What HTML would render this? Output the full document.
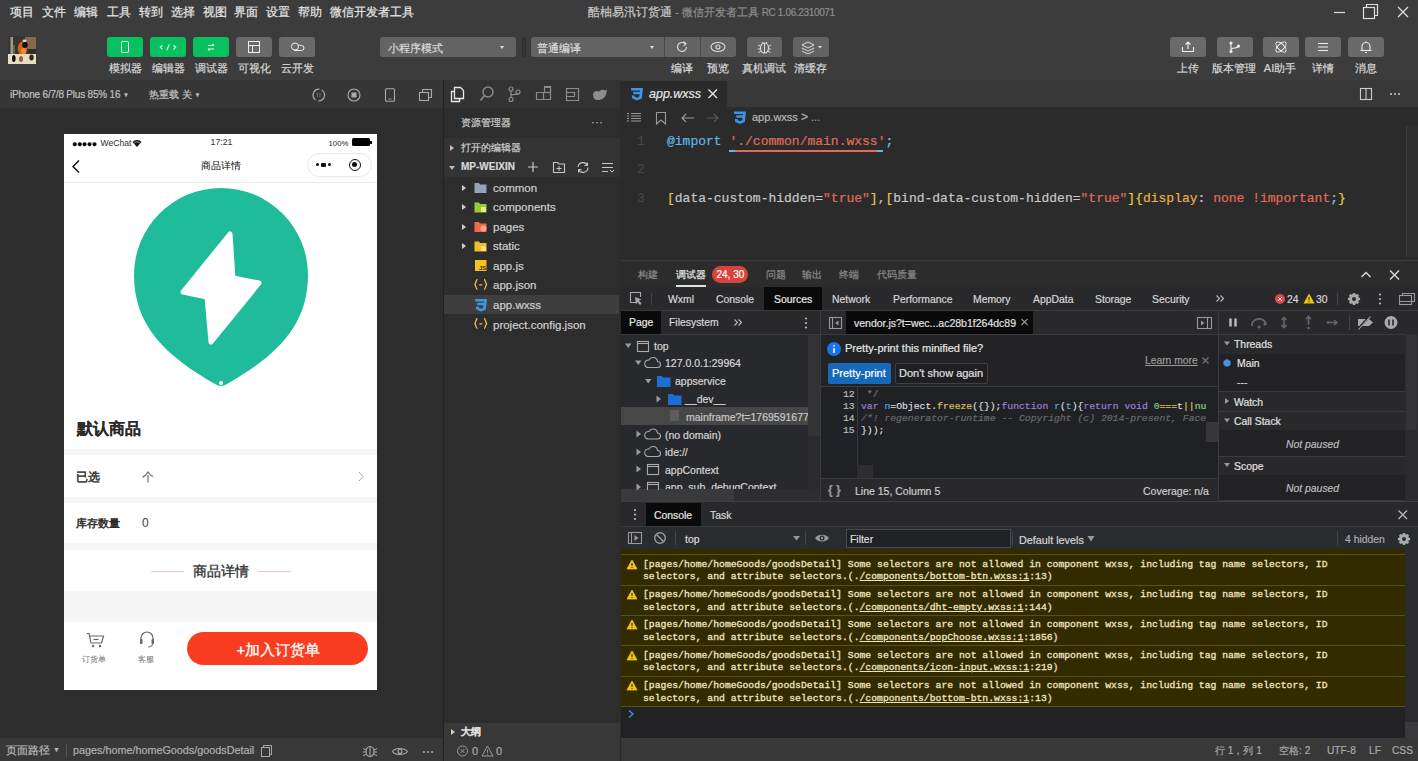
<!DOCTYPE html>
<html><head><meta charset="utf-8">
<style>
*{box-sizing:border-box;margin:0;padding:0}
html,body{width:1418px;height:761px;overflow:hidden;background:#2d2d2d;font-family:"Liberation Sans",sans-serif;color:#ccc}
body{-webkit-text-stroke-width:0.2px}
.a{position:absolute}
.nw{white-space:nowrap}
svg{display:block}
.mono{font-family:"Liberation Mono",monospace;font-size:9.76px;line-height:12.7px;-webkit-text-stroke:0.3px #eee3c2}
u{text-decoration:underline;text-underline-offset:1px}
/* menu */
#menu span{position:absolute;top:5px;font-size:11.7px;color:#e6e6e6;line-height:14px}
.tb{position:absolute;top:37px;width:36px;height:20px;border-radius:3px;background:#6a6a6a}
.tb.g{background:#07c160}
.tl{position:absolute;top:62px;font-size:11px;line-height:13px;color:#d8d8d8;text-align:center;white-space:nowrap}
</style></head><body>
<!-- top bar -->
<div class="a" style="left:0;top:0;width:1418px;height:80px;background:#3c3c3c"></div>
<div id="menu">
<span style="left:10px">项目</span><span style="left:42px">文件</span><span style="left:74px">编辑</span><span style="left:107px">工具</span><span style="left:139px">转到</span><span style="left:171px">选择</span><span style="left:203px">视图</span><span style="left:234px">界面</span><span style="left:266px">设置</span><span style="left:298px">帮助</span><span style="left:330px">微信开发者工具</span>
</div>
<div class="a nw" style="left:588px;top:5px;font-size:11.5px;line-height:14px;color:#c8c8c8">酷柚易汛订货通 <span style="color:#8e8e8e;font-size:10.6px">- 微信开发者工具 <span style="font-size:10px;letter-spacing:-0.35px">RC 1.06.2310071</span></span></div>
<!-- window controls -->
<svg class="a" style="left:1330px;top:4px" width="88" height="18">
<line x1="4" y1="8.5" x2="15" y2="8.5" stroke="#ddd" stroke-width="1.2"/>
<rect x="33.5" y="3.5" width="11" height="11" fill="none" stroke="#ddd" stroke-width="1.2"/>
<path d="M36.5 3.5V0.5H47.5V11.5H44.5" fill="none" stroke="#ddd" stroke-width="1.2"/>
<path d="M68 3L78 13M78 3L68 13" stroke="#ddd" stroke-width="1.3"/>
</svg>
<!-- avatar -->
<svg class="a" style="left:8px;top:36px" width="28" height="28" viewBox="0 0 28 28">
<defs><filter id="bl" x="-10%" y="-10%" width="120%" height="120%"><feGaussianBlur stdDeviation="0.7"/></filter></defs>
<g filter="url(#bl)">
<rect x="0" y="0" width="28" height="28" fill="#3a342e"/>
<rect x="17" y="1" width="11" height="12" fill="#86684e"/>
<rect x="2.5" y="1" width="2.5" height="19" fill="#9a9a96"/>
<rect x="5.5" y="9" width="1" height="12" fill="#7a9a50"/>
<ellipse cx="14.5" cy="12.5" rx="4.7" ry="7" fill="#d2601c"/>
<ellipse cx="15.5" cy="15" rx="2.5" ry="3" fill="#f09028"/>
<ellipse cx="17" cy="9" rx="2.8" ry="3" fill="#101018"/>
<ellipse cx="16.5" cy="4.8" rx="2" ry="1.3" fill="#e8dcc0"/>
<rect x="20" y="13" width="8" height="4.5" fill="#283028"/>
<rect x="0" y="18" width="28" height="10" fill="#e6dec2"/>
<ellipse cx="5.8" cy="22.5" rx="1.8" ry="3.5" fill="#111"/>
<ellipse cx="13" cy="23" rx="2" ry="3" fill="#a05a40"/>
<ellipse cx="23.5" cy="21.5" rx="2.2" ry="3" fill="#2a2a18"/>
</g></svg>
<!-- left tool buttons -->
<div class="tb g" style="left:107px"><svg width="36" height="20"><rect x="14.5" y="4.5" width="7" height="11" rx="1" fill="none" stroke="#fff" stroke-width="1"/></svg></div>
<div class="tb g" style="left:150px"><svg width="36" height="20"><path d="M12.5 8.3L10.3 10.3L12.5 12.3M23.5 8.3L25.7 10.3L23.5 12.3M19.3 7.5L16.7 13.2" fill="none" stroke="#eafff2" stroke-width="1.1"/></svg></div>
<div class="tb g" style="left:193px"><svg width="36" height="20"><path d="M15 8.5H21M19.5 7L21 8.5M21 12H15M16.5 13.5L15 12" fill="none" stroke="#eafff2" stroke-width="1.1"/></svg></div>
<div class="tb" style="left:236px"><svg width="36" height="20"><rect x="12.5" y="4.5" width="11" height="11" fill="none" stroke="#eee" stroke-width="1"/><path d="M12.5 8.5H23.5M16.5 8.5V15.5" stroke="#eee" stroke-width="1"/></svg></div>
<div class="tb" style="left:279px"><svg width="36" height="20"><circle cx="16" cy="9.5" r="3.5" fill="none" stroke="#eee" stroke-width="1"/><path d="M15 13.5H22.5A2.5 2.5 0 0 0 22.5 8.5A3 3 0 0 0 19 9" fill="none" stroke="#eee" stroke-width="1"/></svg></div>
<div class="tl" style="left:100px;width:50px">模拟器</div>
<div class="tl" style="left:143px;width:50px">编辑器</div>
<div class="tl" style="left:186px;width:50px">调试器</div>
<div class="tl" style="left:229px;width:50px">可视化</div>
<div class="tl" style="left:272px;width:50px">云开发</div>
<!-- mode dropdowns -->
<div class="a" style="left:380px;top:37px;width:136px;height:20px;border-radius:3px;background:#636363"></div>
<div class="a nw" style="left:387.5px;top:40.5px;font-size:10.7px;line-height:14px;color:#dedede">小程序模式</div>
<div class="a" style="left:500px;top:46px;width:0;height:0;border-left:2.5px solid transparent;border-right:2.5px solid transparent;border-top:3px solid #ddd"></div>
<div class="a" style="left:522px;top:37px;width:4px;height:20px;background:#353535;border-left:1px solid #2e2e2e;border-right:1px solid #2e2e2e"></div>
<div class="a" style="left:531px;top:37px;width:205px;height:20px;border-radius:3px;background:#636363"></div>
<div class="a" style="left:664px;top:37px;width:1px;height:20px;background:#4a4a4a"></div>
<div class="a" style="left:700px;top:37px;width:1px;height:20px;background:#4a4a4a"></div>
<div class="a nw" style="left:537px;top:40.5px;font-size:10.7px;line-height:14px;color:#dedede">普通编译</div>
<div class="a" style="left:650px;top:46px;width:0;height:0;border-left:2.5px solid transparent;border-right:2.5px solid transparent;border-top:3px solid #ddd"></div>
<svg class="a" style="left:664px;top:37px" width="72" height="20">
<path d="M22.5 10A4.5 4.5 0 1 1 21 6.6" fill="none" stroke="#ddd" stroke-width="1.1"/><path d="M19.5 4.5L22 6.8L19.8 8.8" fill="none" stroke="#ddd" stroke-width="1.1"/>
<ellipse cx="54" cy="10" rx="7" ry="4.5" fill="none" stroke="#ddd" stroke-width="1.1"/><circle cx="54" cy="10" r="2" fill="none" stroke="#ddd" stroke-width="1.1"/>
</svg>
<div class="a" style="left:747px;top:37px;width:35px;height:20px;border-radius:3px;background:#636363"><svg width="35" height="20"><ellipse cx="17.5" cy="11" rx="4" ry="5" fill="none" stroke="#ddd" stroke-width="1.1"/><path d="M17.5 6V16M11 8L13.5 9.5M24 8L21.5 9.5M11 12H13.5M24 12H21.5M11.5 15.5L14 14M23.5 15.5L21 14M15 5L16 6.5M20 5L19 6.5" stroke="#ddd" stroke-width="1"/></svg></div>
<div class="a" style="left:793px;top:37px;width:36px;height:20px;border-radius:3px;background:#636363"><svg width="36" height="20"><path d="M9 8L15 5L21 8L15 11Z" fill="none" stroke="#ddd" stroke-width="1"/><path d="M9 11L15 14L21 11M9 14L15 17L21 14" fill="none" stroke="#ddd" stroke-width="1"/><path d="M25 9L29 9L27 11.5Z" fill="#ddd"/></svg></div>
<div class="tl" style="left:662px;width:40px">编译</div>
<div class="tl" style="left:698px;width:40px">预览</div>
<div class="tl" style="left:734px;width:60px">真机调试</div>
<div class="tl" style="left:785px;width:50px">清缓存</div>
<!-- right buttons -->
<div class="tb" style="left:1170px"><svg width="36" height="20"><path d="M12.5 10V14.5H23.5V10M18 12V5M15.5 7.5L18 5L20.5 7.5" fill="none" stroke="#eee" stroke-width="1.1"/></svg></div>
<div class="tb" style="left:1217px"><svg width="36" height="20"><circle cx="14" cy="6" r="1.6" fill="#eee"/><circle cx="14" cy="14.5" r="1.6" fill="#eee"/><circle cx="21.5" cy="9" r="1.6" fill="#eee"/><path d="M14 6V14.5M14 13C14 10 21.5 12 21.5 9" fill="none" stroke="#eee" stroke-width="1.1"/></svg></div>
<div class="tb" style="left:1263px"><svg width="36" height="20"><ellipse cx="18" cy="10" rx="6.5" ry="3" fill="none" stroke="#eee" stroke-width="1" transform="rotate(45 18 10)"/><ellipse cx="18" cy="10" rx="6.5" ry="3" fill="none" stroke="#eee" stroke-width="1" transform="rotate(-45 18 10)"/></svg></div>
<div class="tb" style="left:1305px"><svg width="36" height="20"><path d="M13 6.5H23M13 10H23M13 13.5H23" stroke="#eee" stroke-width="1.1"/></svg></div>
<div class="tb" style="left:1348px"><svg width="36" height="20"><path d="M14 13.5V9.5A4 4 0 0 1 22 9.5V13.5H23.5H12.5M17 15.5H19M18 4.5V5.5" fill="none" stroke="#eee" stroke-width="1.1"/></svg></div>
<div class="tl" style="left:1163px;width:50px">上传</div>
<div class="tl" style="left:1209px;width:50px">版本管理</div>
<div class="tl" style="left:1255px;width:50px">AI助手</div>
<div class="tl" style="left:1298px;width:50px">详情</div>
<div class="tl" style="left:1341px;width:50px">消息</div>

<!-- SIMULATOR -->
<div class="a" style="left:0;top:80px;width:444px;height:28px;background:#363636"></div>
<div class="a nw" style="left:10px;top:88px;font-size:10px;line-height:13px;color:#c0c0c0;letter-spacing:-0.2px">iPhone 6/7/8 Plus 85% 16 <span style="font-size:6px;position:relative;top:-1px">▼</span></div>
<div class="a nw" style="left:149px;top:88px;font-size:10px;line-height:13px;color:#c0c0c0">热重载 关 <span style="font-size:6px;position:relative;top:-1px">▼</span></div>
<svg class="a" style="left:300px;top:84px" width="140" height="22">
<circle cx="18.8" cy="11" r="5.8" fill="none" stroke="#a8a8a8" stroke-width="1.2" stroke-dasharray="15 3.2" transform="rotate(-60 18.8 11)"/><path d="M17.5 9V13M20 9V13" stroke="#777" stroke-width="0.8"/>
<circle cx="54" cy="11" r="6" fill="none" stroke="#aaa" stroke-width="1.1"/><rect x="51.5" y="8.5" width="5" height="5" fill="#aaa"/>
<rect x="85.5" y="4.8" width="9" height="12.4" rx="1" fill="none" stroke="#aaa" stroke-width="1.1"/><path d="M88.5 15H91.5" stroke="#aaa" stroke-width="0.9"/>
<rect x="119.5" y="8.5" width="9" height="8" fill="none" stroke="#aaa" stroke-width="1.1"/><path d="M122.5 8.5V5.5H131.5V13.5H128.5" fill="none" stroke="#aaa" stroke-width="1.1"/>
</svg>
<div class="a" style="left:443px;top:80px;width:1px;height:681px;background:#232323"></div>

<!-- PHONE -->
<div class="a" style="left:64px;top:134px;width:313px;height:556px;background:#fff;overflow:hidden;-webkit-text-stroke-width:0.05px" id="phone">
<div class="a nw" style="left:8px;top:5px;font-size:9px;line-height:10px;color:#000;letter-spacing:-0.5px">●●●●●</div>
<div class="a nw" style="left:36.5px;top:4px;font-size:8.6px;line-height:11px;color:#333">WeChat</div>
<svg class="a" style="left:68px;top:5px" width="10" height="8"><path d="M0.5 3A6 6 0 0 1 9.5 3L5 8Z" fill="#111"/><path d="M2 4.2A4 4 0 0 1 8 4.2" stroke="#fff" stroke-width="0.6" fill="none"/></svg>
<div class="a nw" style="left:146.5px;top:3px;font-size:8.8px;line-height:11px;color:#333">17:21</div>
<div class="a nw" style="left:264.5px;top:4.5px;font-size:7.8px;line-height:10px;color:#333">100%</div>
<div class="a" style="left:288px;top:4px;width:18px;height:8px;border-radius:1.5px;background:#000"></div>
<div class="a" style="left:306px;top:6.5px;width:2px;height:3px;background:#000"></div>
<svg class="a" style="left:6px;top:25px" width="12" height="15"><path d="M9 1.5L3 7.5L9 13.5" fill="none" stroke="#111" stroke-width="1.5"/></svg>
<div class="a nw" style="left:137px;top:26px;font-size:10px;line-height:12px;color:#111">商品详情</div>
<div class="a" style="left:242.5px;top:18.5px;width:65px;height:24px;border-radius:12px;border:1px solid #e8e8e8;background:#fff"></div>
<div class="a" style="left:251.5px;top:29.3px;width:3.2px;height:3.2px;border-radius:2px;background:#111"></div>
<div class="a" style="left:257px;top:28.6px;width:4.6px;height:4.4px;border-radius:1px;background:#111"></div>
<div class="a" style="left:264.2px;top:29.3px;width:3.2px;height:3.2px;border-radius:2px;background:#111"></div>
<div class="a" style="left:284.5px;top:24.5px;width:12.5px;height:12.5px;border-radius:7px;border:1.6px solid #111"></div>
<div class="a" style="left:288.2px;top:28.2px;width:5px;height:5px;border-radius:3px;background:#111"></div>
<div class="a" style="left:0;top:47.5px;width:313px;height:1px;background:#f1e6e6"></div>
<svg class="a" style="left:0;top:0" width="313" height="260">
<path d="M157 54A87 87 0 0 1 244 141C244 192 212 222 163 250Q157 254 151 250C102 222 70 192 70 141A87 87 0 0 1 157 54Z" fill="#20bb9b"/>
<path d="M166 100L169 144L195 149L147 208L143 163L119 158Z" fill="#fff" stroke="#fff" stroke-width="5" stroke-linejoin="round"/>
<circle cx="157" cy="249" r="2" fill="#fff"/>
</svg>
<div class="a nw" style="left:12.5px;top:284.5px;font-size:16.2px;line-height:18px;color:#2a2a2a;font-weight:bold">默认商品</div>
<div class="a" style="left:0;top:315px;width:313px;height:6px;background:#f5f5f5"></div>
<div class="a nw" style="left:12px;top:336px;font-size:11.5px;line-height:14px;color:#2a2a2a;-webkit-text-stroke:0.45px #2a2a2a">已选</div>
<div class="a nw" style="left:78px;top:336px;font-size:12px;line-height:14px;color:#555">个</div>
<svg class="a" style="left:294px;top:337px" width="6" height="11"><path d="M1 1L5 5.5L1 10" fill="none" stroke="#aaa" stroke-width="1"/></svg>
<div class="a" style="left:0;top:363px;width:313px;height:6px;background:#f5f5f5"></div>
<div class="a nw" style="left:12px;top:382px;font-size:11.3px;line-height:14px;color:#2a2a2a;-webkit-text-stroke:0.45px #2a2a2a">库存数量</div>
<div class="a nw" style="left:78px;top:382px;font-size:12px;line-height:14px;color:#444">0</div>
<div class="a" style="left:0;top:409px;width:313px;height:7px;background:#f5f5f5"></div>
<div class="a" style="left:87px;top:437px;width:33px;height:1px;background:#f2c4bd"></div>
<div class="a" style="left:194px;top:437px;width:33px;height:1px;background:#f2c4bd"></div>
<div class="a nw" style="left:128.5px;top:429px;font-size:14.2px;line-height:16px;color:#333;-webkit-text-stroke:0.35px #333">商品详情</div>
<div class="a" style="left:0;top:457px;width:313px;height:31px;background:#f5f5f5"></div>
<svg class="a" style="left:20.5px;top:497px" width="22" height="18"><path d="M1.5 2.5H4L6 12H16.5L18.5 5H5" fill="none" stroke="#666" stroke-width="1.2"/><path d="M8.5 8.5H13.5" stroke="#666" stroke-width="1.2"/><circle cx="8" cy="15" r="1.2" fill="#666"/><circle cx="15" cy="15" r="1.2" fill="#666"/></svg>
<div class="a nw" style="left:18px;top:521px;font-size:7.5px;line-height:9px;color:#777">订货单</div>
<svg class="a" style="left:74px;top:496px" width="18" height="20"><path d="M3 10V8A6 6 0 0 1 15 8V10" fill="none" stroke="#666" stroke-width="1.2"/><rect x="2" y="9" width="2.5" height="5" rx="1" fill="#666"/><rect x="13.5" y="9" width="2.5" height="5" rx="1" fill="#666"/><path d="M14.5 14Q14 17 10 17" fill="none" stroke="#666" stroke-width="1.1"/></svg>
<div class="a nw" style="left:74px;top:521px;font-size:7.5px;line-height:9px;color:#777">客服</div>
<div class="a" style="left:123px;top:498px;width:181px;height:33px;border-radius:17px;background:#fa3d20"></div>
<div class="a nw" style="left:172.5px;top:507px;font-size:15px;line-height:17px;color:#fff;-webkit-text-stroke:0.3px #fff">+加入订货单</div>
</div>

<!-- bottom-left status -->
<div class="a" style="left:0;top:738px;width:443px;height:23px;background:#383838"></div>
<div class="a nw" style="left:6px;top:744px;font-size:11px;line-height:13px;color:#b8b8b8">页面路径 <span style="font-size:7px;position:relative;top:-2px">▼</span></div>
<div class="a" style="left:66px;top:744px;width:1px;height:13px;background:#555"></div>
<div class="a nw" style="left:73px;top:744px;font-size:10.8px;line-height:13px;color:#b0b0b0">pages/home/homeGoods/goodsDetail</div>
<svg class="a" style="left:258px;top:744px" width="180" height="14">
<rect x="3.5" y="3.5" width="8" height="9" fill="none" stroke="#aaa" stroke-width="1"/><path d="M5.5 3.5V1.5H13.5V10.5H11.5" fill="none" stroke="#aaa" stroke-width="1"/>
<ellipse cx="112" cy="7.5" rx="4" ry="5" fill="none" stroke="#aaa" stroke-width="1.1"/><path d="M112 3V12.5M105 4.5L108 6M119 4.5L116 6M105 8H108M119 8H116M105 11.5L108 10.5M119 11.5L116 10.5" stroke="#aaa" stroke-width="1"/>
<path d="M134.5 7.5C137 3.5 146 3.5 149.5 7.5C146 11.5 137 11.5 134.5 7.5Z" fill="none" stroke="#aaa" stroke-width="1.1"/><circle cx="142" cy="7.5" r="2" fill="none" stroke="#aaa" stroke-width="1.1"/>
<circle cx="166" cy="8" r="1" fill="#aaa"/><circle cx="170" cy="8" r="1" fill="#aaa"/><circle cx="174" cy="8" r="1" fill="#aaa"/>
</svg>
<!-- EXPLORER -->
<div class="a" style="left:444px;top:80px;width:176px;height:28px;background:#333"></div>
<svg class="a" style="left:444px;top:80px" width="176" height="28">
<path d="M10.5 11.5H7.5V21.5H15.5V19" fill="none" stroke="#e8e8e8" stroke-width="1.3"/>
<path d="M10.5 7.5H16.5L19.5 10.5V18.5H10.5Z" fill="none" stroke="#e8e8e8" stroke-width="1.3"/>
<circle cx="44" cy="12" r="5" fill="none" stroke="#8c8c8c" stroke-width="1.4"/><path d="M40.5 15.5L36.5 20.5" stroke="#8c8c8c" stroke-width="1.5"/>
<circle cx="67" cy="9" r="2" fill="none" stroke="#8c8c8c" stroke-width="1.2"/><circle cx="67" cy="19.5" r="2" fill="none" stroke="#8c8c8c" stroke-width="1.2"/><circle cx="74" cy="12" r="2" fill="none" stroke="#8c8c8c" stroke-width="1.2"/><path d="M67 11V17.5M67 16C67 13.5 74 15 74 14" fill="none" stroke="#8c8c8c" stroke-width="1.2"/>
<path d="M92.5 12.5H99.5V19.5H92.5ZM99.5 12.5V19.5H106.5V12.5H99.5M100.5 7.5H106.5V12" fill="none" stroke="#8c8c8c" stroke-width="1.2"/><rect x="100.5" y="6.5" width="6" height="6" fill="none" stroke="#8c8c8c" stroke-width="1.2"/>
<path d="M122.5 8.5H134.5V20.5H122.5ZM122.5 12.5H130.5V16.5H122.5" fill="none" stroke="#8c8c8c" stroke-width="1.2"/>
<path d="M149 15C149 11.5 152 10 155 11.5C157 9 160 9.5 161 10.5L163 9.5L162.5 13C161.5 17.5 158 20 154 20C151 20 149 18 149 15Z" fill="#8c8c8c"/>
</svg>
<div class="a" style="left:444px;top:108px;width:176px;height:615px;background:#2d2d2d"></div>
<div class="a nw" style="left:461px;top:117px;font-size:10px;line-height:12px;color:#cfcfcf">资源管理器</div>
<div class="a nw" style="left:591px;top:115.5px;font-size:11px;line-height:12px;color:#bbb;letter-spacing:0.5px">···</div>
<div class="a" style="left:444px;top:138px;width:176px;height:39px;background:#333"></div>
<div class="a" style="left:450px;top:145px;width:0;height:0;border-top:3px solid transparent;border-bottom:3px solid transparent;border-left:4px solid #bbb"></div>
<div class="a nw" style="left:461px;top:142px;font-size:10px;line-height:12px;color:#cfcfcf">打开的编辑器</div>
<div class="a" style="left:449px;top:166px;width:0;height:0;border-left:3px solid transparent;border-right:3px solid transparent;border-top:4px solid #bbb"></div>
<div class="a nw" style="left:461px;top:161px;font-size:10px;line-height:12px;color:#d8d8d8;font-weight:bold">MP-WEIXIN</div>
<svg class="a" style="left:525px;top:159px" width="95" height="18">
<path d="M8 3V13M3 8H13" stroke="#c8c8c8" stroke-width="1.2"/>
<path d="M28.5 3.5H32.5L34 5H39.5V13.5H28.5Z" fill="none" stroke="#c8c8c8" stroke-width="1.1"/><path d="M31.5 9.5H36.5M34 7V12" stroke="#c8c8c8" stroke-width="1"/>
<path d="M63 8.5A5 5 0 0 1 53.5 10.5M53 8A5 5 0 0 1 62.5 6.5" fill="none" stroke="#c8c8c8" stroke-width="1.1"/><path d="M62.5 3.5V6.5H59.5M53.5 13.5V10.5H56.5" fill="none" stroke="#c8c8c8" stroke-width="1"/>
<path d="M77 4.5H88M77 8.5H88M77 12.5H83" stroke="#c8c8c8" stroke-width="1.1"/><path d="M85 11L87 13L89 11" fill="none" stroke="#c8c8c8" stroke-width="1"/>
</svg>
<!-- tree rows -->
<div class="a" style="left:444px;top:295px;width:175px;height:19px;background:#3e3e3e"></div>
<div class="a" style="left:462px;top:185px;width:0;height:0;border-top:3.5px solid transparent;border-bottom:3.5px solid transparent;border-left:4px solid #ccc"></div>
<div class="a" style="left:462px;top:204px;width:0;height:0;border-top:3.5px solid transparent;border-bottom:3.5px solid transparent;border-left:4px solid #ccc"></div>
<div class="a" style="left:462px;top:224px;width:0;height:0;border-top:3.5px solid transparent;border-bottom:3.5px solid transparent;border-left:4px solid #ccc"></div>
<div class="a" style="left:462px;top:243px;width:0;height:0;border-top:3.5px solid transparent;border-bottom:3.5px solid transparent;border-left:4px solid #ccc"></div>
<svg class="a" style="left:474px;top:180px" width="16" height="155">
<path d="M0.5 3H5L6 4.5H12.5V13H0.5Z" fill="#93a4b8"/>
<path d="M0.5 22.5H5L6 24H12.5V32.5H0.5Z" fill="#9cc93a"/><rect x="7" y="27" width="5" height="5" fill="#e4ec8a"/>
<path d="M0.5 42H5L6 43.5H12.5V52H0.5Z" fill="#f0694b"/><circle cx="9.5" cy="48.5" r="3" fill="#f6a48c"/>
<path d="M0.5 61.5H5L6 63H12.5V71.5H0.5Z" fill="#f4bc2a"/><rect x="7" y="66" width="5" height="5" fill="#fbe07a"/>
<rect x="1" y="80" width="11.5" height="11" fill="#f4c21d"/><text x="5" y="90" font-size="6" font-weight="bold" fill="#3a2a00" font-family="Liberation Sans">JS</text>
<path d="M3.5 99.5C1.5 99.5 2.5 104 0.5 104.5C2.5 105 1.5 109.5 3.5 109.5M10 99.5C12 99.5 11 104 13 104.5C11 105 12 109.5 10 109.5M5.3 104.8H8.2" fill="none" stroke="#e6c84a" stroke-width="1.3"/>
<path d="M1 119H13L11.8 129.5L7 131.5L2.2 129.5L1.9 126.5H4.6L4.8 127.8L7 128.7L9.2 127.8L9.5 125.3H3.5L3.2 122.7H9.8L10 121.5H1.2Z" fill="#3b95e8"/>
<path d="M3.5 138.5C1.5 138.5 2.5 143 0.5 143.5C2.5 144 1.5 148.5 3.5 148.5M10 138.5C12 138.5 11 143 13 143.5C11 144 12 148.5 10 148.5M5.3 143.8H8.2" fill="none" stroke="#e6c84a" stroke-width="1.3"/>
</svg>
<div class="a nw" style="left:493px;top:181px;font-size:11.5px;line-height:14px;color:#d0d0d0">common</div>
<div class="a nw" style="left:493px;top:200px;font-size:11.5px;line-height:14px;color:#d0d0d0">components</div>
<div class="a nw" style="left:493px;top:220px;font-size:11.5px;line-height:14px;color:#d0d0d0">pages</div>
<div class="a nw" style="left:493px;top:239px;font-size:11.5px;line-height:14px;color:#d0d0d0">static</div>
<div class="a nw" style="left:493px;top:259px;font-size:11.5px;line-height:14px;color:#d0d0d0">app.js</div>
<div class="a nw" style="left:493px;top:278px;font-size:11.5px;line-height:14px;color:#d0d0d0">app.json</div>
<div class="a nw" style="left:493px;top:298px;font-size:11.5px;line-height:14px;color:#d0d0d0">app.wxss</div>
<div class="a nw" style="left:493px;top:318px;font-size:11.5px;line-height:14px;color:#d0d0d0">project.config.json</div>
<!-- outline -->
<div class="a" style="left:444px;top:723px;width:176px;height:38px;background:#383838"></div>
<div class="a" style="left:451px;top:729px;width:0;height:0;border-top:3px solid transparent;border-bottom:3px solid transparent;border-left:4px solid #ccc"></div>
<div class="a nw" style="left:461px;top:726px;font-size:10px;line-height:12px;color:#ddd;font-weight:bold">大纲</div>
<svg class="a" style="left:456px;top:744px" width="50" height="14">
<circle cx="6.5" cy="7" r="5" fill="none" stroke="#999" stroke-width="1"/><path d="M4.5 5L8.5 9M8.5 5L4.5 9" stroke="#999" stroke-width="1"/>
<path d="M31.5 2L37 12H26Z" fill="none" stroke="#999" stroke-width="1"/><path d="M31.5 5.5V9M31.5 10V11" stroke="#999" stroke-width="0.9"/>
</svg>
<div class="a nw" style="left:472px;top:745px;font-size:11px;line-height:12px;color:#aaa">0</div>
<div class="a nw" style="left:496px;top:745px;font-size:11px;line-height:12px;color:#aaa">0</div>
<div class="a" style="left:620px;top:80px;width:1px;height:681px;background:#2a2a2a"></div>

<!-- EDITOR -->
<div class="a" style="left:621px;top:80px;width:797px;height:27px;background:#383838"></div>
<div class="a" style="left:621px;top:81px;width:106px;height:26px;background:#2b2b2b"></div>
<svg class="a" style="left:630px;top:88px" width="16" height="13">
<path d="M1 0H13L11.8 10.5L7 12.5L2.2 10.5L1.9 7.5H4.6L4.8 8.8L7 9.7L9.2 8.8L9.5 6.3H3.5L3.2 3.7H9.8L10 2.5H1.2Z" fill="#3b95e8"/>
</svg>
<div class="a nw" style="left:649px;top:87px;font-size:12.5px;line-height:15px;color:#e6e6e6;font-style:italic">app.wxss</div>
<svg class="a" style="left:707px;top:88px" width="12" height="12"><path d="M1.5 1.5L10 10M10 1.5L1.5 10" stroke="#e6e6e6" stroke-width="1.4"/></svg>
<svg class="a" style="left:1355px;top:86px" width="60" height="16">
<rect x="5.5" y="2.5" width="11" height="11" fill="none" stroke="#ccc" stroke-width="1.1"/><path d="M11 2.5V13.5" stroke="#ccc" stroke-width="1.1"/>
<circle cx="36" cy="8" r="1" fill="#ccc"/><circle cx="40" cy="8" r="1" fill="#ccc"/><circle cx="44" cy="8" r="1" fill="#ccc"/>
</svg>
<div class="a" style="left:621px;top:107px;width:797px;height:153px;background:#2b2b2b"></div>
<svg class="a" style="left:621px;top:110px" width="200" height="16">
<path d="M6 3.5H8M6 6H8M6 8.5H8M6 11H8M10 3.5H20M10 6H20M10 8.5H20M10 11H20" stroke="#9a9a9a" stroke-width="1"/>
<path d="M35.5 2.5H44.5V14L40 10L35.5 14Z" fill="none" stroke="#9a9a9a" stroke-width="1.1"/>
<path d="M61 8H73M65 4L61 8L65 12" fill="none" stroke="#9a9a9a" stroke-width="1.1"/>
<path d="M86 8H97M93 4L97 8L93 12" fill="none" stroke="#5a5a5a" stroke-width="1.1"/>
<path d="M113 1.5H125L123.8 12L119 14L114.2 12L113.9 9H116.6L116.8 10.3L119 11.2L121.2 10.3L121.5 7.8H115.5L115.2 5.2H121.8L122 4H113.2Z" fill="#3b95e8"/>
</svg>
<div class="a nw" style="left:752px;top:111px;font-size:11px;line-height:13px;color:#b8b8b8">app.wxss <span style="font-size:12px">&gt;</span> <span style="color:#999">...</span></div>
<div class="a" style="left:1406px;top:126px;width:12px;height:131px;background:#2f2f2f;border-left:1px solid #3c3c3c"></div>
<div style="font-family:'Liberation Mono',monospace;font-size:13px;line-height:16px">
<div class="a nw" style="left:637px;top:134px;color:#474747">1</div>
<div class="a nw" style="left:637px;top:162px;color:#474747">2</div>
<div class="a nw" style="left:637px;top:191px;color:#474747">3</div>
<div class="a nw" style="left:667px;top:134px"><span style="color:#5fb8e8">@import</span> <span style="color:#e26b5a">'./common/main.wxss'</span><span style="color:#7ec3e6">;</span></div>
<div class="a" style="left:729px;top:150px;width:148px;height:1.5px;background:#e26b5a"></div>
<div class="a" style="left:729px;top:150px;width:6px;height:1.5px;background:#5fb8e8"></div>
<div class="a" style="left:877px;top:150px;width:6px;height:1.5px;background:#5fb8e8"></div>
<div class="a nw" style="left:667px;top:191px;color:#c8c8c8"><span style="color:#e6c84a">[</span>data-custom-hidden=<span style="color:#e26b5a">"true"</span><span style="color:#e6c84a">]</span>,<span style="color:#e6c84a">[</span>bind-data-custom-hidden=<span style="color:#e26b5a">"true"</span><span style="color:#e6c84a">]{</span><span style="color:#e8b04a">display</span>: <span style="color:#e26b5a">none !important</span><span style="color:#7ec3e6">;</span><span style="color:#e6c84a">}</span></div>
</div>

<!-- DEVTOOLS -->
<div class="a" style="left:621px;top:260px;width:797px;height:478px;background:#2c2c2c"></div>
<div class="a" style="left:621px;top:260px;width:797px;height:1px;background:#3c3c3c"></div>
<div style="font-size:10px;line-height:12px">
<div class="a nw" style="left:638px;top:268.5px;color:#8a8a8a">构建</div>
<div class="a nw" style="left:676px;top:268.5px;color:#e6e6e6;font-size:10.3px">调试器</div>
<div class="a" style="left:676px;top:285px;width:30px;height:1.5px;background:#e0e0e0"></div>
<div class="a" style="left:712px;top:266px;width:36px;height:16.5px;border-radius:8.5px;background:#d8433c"></div>
<div class="a nw" style="left:716.5px;top:268.5px;color:#fff;font-size:10px">24, 30</div>
<div class="a nw" style="left:765.5px;top:268.5px;color:#8a8a8a">问题</div>
<div class="a nw" style="left:801.5px;top:268.5px;color:#8a8a8a">输出</div>
<div class="a nw" style="left:839px;top:268.5px;color:#8a8a8a">终端</div>
<div class="a nw" style="left:877px;top:268.5px;color:#8a8a8a">代码质量</div>
</div>
<svg class="a" style="left:1355px;top:268px" width="50" height="14">
<path d="M6.5 9L11 4.5L15.5 9" fill="none" stroke="#ddd" stroke-width="1.3"/>
<path d="M35 2.5L44 11.5M44 2.5L35 11.5" stroke="#ddd" stroke-width="1.3"/>
</svg>
<!-- main toolbar -->
<div class="a" style="left:622px;top:287px;width:796px;height:23px;background:#29292c"></div>
<div class="a" style="left:764px;top:287px;width:58px;height:23px;background:#0a0a0a"></div>
<svg class="a" style="left:626px;top:290px" width="30" height="18">
<path d="M10 12.5H4.5V2.5H14.5V7" fill="none" stroke="#aaa" stroke-width="1.1"/><path d="M9 7L15.5 9.5L12.8 10.5L15.5 13.5L14 15L11.5 12L10 14.5Z" fill="#aaa"/>
<path d="M25.5 3V15" stroke="#444" stroke-width="1"/>
</svg>
<div style="font-size:10.4px;line-height:12px;color:#d6d6d6;position:absolute;left:0;top:0.8px">
<div class="a nw" style="left:668px;top:293px">Wxml</div>
<div class="a nw" style="left:716px;top:293px">Console</div>
<div class="a nw" style="left:774px;top:293px;color:#e8e8e8">Sources</div>
<div class="a nw" style="left:832px;top:293px">Network</div>
<div class="a nw" style="left:893px;top:293px">Performance</div>
<div class="a nw" style="left:973px;top:293px">Memory</div>
<div class="a nw" style="left:1033px;top:293px">AppData</div>
<div class="a nw" style="left:1095px;top:293px">Storage</div>
<div class="a nw" style="left:1152px;top:293px">Security</div>
<div class="a nw" style="left:1287px;top:293px">24</div>
<div class="a nw" style="left:1316px;top:293px">30</div>
</div>
<svg class="a" style="left:1210px;top:290px" width="208" height="18">
<path d="M6.5 5.5L9.5 8.5L6.5 11.5M10.5 5.5L13.5 8.5L10.5 11.5" fill="none" stroke="#bbb" stroke-width="1.1"/>
<circle cx="70" cy="9" r="5" fill="#e2464a"/><path d="M68 7L72 11M72 7L68 11" stroke="#fff" stroke-width="1"/>
<path d="M99 3.5L104.5 13.5H93.5Z" fill="#f2c417"/><path d="M99 7V10.5M99 11.5V12.5" stroke="#302800" stroke-width="1"/>
<path d="M127.5 3V15" stroke="#444" stroke-width="1"/>
<path d="M148.35 7.51 L150.10 7.88 L150.10 10.12 L148.35 10.49 L148.13 11.02 L149.10 12.52 L147.52 14.10 L146.02 13.13 L145.49 13.35 L145.12 15.10 L142.88 15.10 L142.51 13.35 L141.98 13.13 L140.48 14.10 L138.90 12.52 L139.87 11.02 L139.65 10.49 L137.90 10.12 L137.90 7.88 L139.65 7.51 L139.87 6.98 L138.90 5.48 L140.48 3.90 L141.98 4.87 L142.51 4.65 L142.88 2.90 L145.12 2.90 L145.49 4.65 L146.02 4.87 L147.52 3.90 L149.10 5.48 L148.13 6.98Z" fill="#aaa"/><circle cx="144" cy="9" r="4.8" fill="#aaa"/><circle cx="144" cy="9" r="2" fill="#29292c"/>
<circle cx="170" cy="4.5" r="1.1" fill="#bbb"/><circle cx="170" cy="9" r="1.1" fill="#bbb"/><circle cx="170" cy="13.5" r="1.1" fill="#bbb"/>
<rect x="189.5" y="5.5" width="12" height="9" fill="none" stroke="#999" stroke-width="1.1"/><path d="M192.5 5.5V3.5H204.5V11.5H201.5" fill="none" stroke="#999" stroke-width="1.1"/><path d="M189.5 11.5H201.5" stroke="#999" stroke-width="1"/>
</svg>
<!-- sources sub rows -->
<div class="a" style="left:622px;top:310px;width:796px;height:1px;background:#3a3a3d"></div>
<div class="a" style="left:622px;top:311px;width:198px;height:23px;background:#29292c"></div>
<div class="a" style="left:621px;top:311px;width:40px;height:23px;background:#0a0a0a"></div>
<div style="font-size:10.4px;line-height:12px;color:#d6d6d6">
<div class="a nw" style="left:629px;top:317px;color:#e8e8e8">Page</div>
<div class="a nw" style="left:669px;top:317px">Filesystem</div>
</div>
<svg class="a" style="left:730px;top:314px" width="90" height="18">
<path d="M4.5 5.5L7.5 8.5L4.5 11.5M8.5 5.5L11.5 8.5L8.5 11.5" fill="none" stroke="#bbb" stroke-width="1.1"/>
<circle cx="76" cy="4.5" r="1.1" fill="#bbb"/><circle cx="76" cy="9" r="1.1" fill="#bbb"/><circle cx="76" cy="13.5" r="1.1" fill="#bbb"/>
</svg>
<div class="a" style="left:820px;top:311px;width:1px;height:191px;background:#3a3a3d"></div>
<div class="a" style="left:621px;top:334px;width:199px;height:1px;background:#3a3a3d"></div>
<div class="a" style="left:621px;top:335px;width:199px;height:155px;background:#28292c"></div>
<div class="a" style="left:621px;top:407px;width:187px;height:18px;background:#474747"></div>
<div class="a" style="left:808px;top:335px;width:12px;height:155px;background:#2b2b2e"></div>
<div class="a" style="left:808px;top:335px;width:12px;height:101px;background:#333336"></div>
<div class="a" style="left:621px;top:489px;width:199px;height:13px;background:#2e2e31"></div>
<div class="a" style="left:621px;top:489px;width:113px;height:13px;background:#3a3a3d"></div>
<svg class="a" style="left:621px;top:335px" width="187" height="155">
<path d="M4 8.5H10.5L7.25 13Z" fill="#9a9a9a"/><rect x="16.5" y="6.5" width="11" height="10" fill="none" stroke="#aaa" stroke-width="1.1"/><path d="M16.5 8.5H27.5" stroke="#aaa" stroke-width="1.1"/>
<path d="M14 25.5H20.5L17.25 30Z" fill="#9a9a9a"/><path d="M27 32.5H36.5A3 3 0 0 0 36.5 26.5A4.5 4.5 0 0 0 28 25A3.7 3.7 0 0 0 27 32.5Z" fill="none" stroke="#aaa" stroke-width="1.1"/>
<path d="M24 44H30.5L27.25 48.5Z" fill="#9a9a9a"/><path d="M36 41H41L42 42.5H49.5V52H36Z" fill="#1a6fd8"/>
<path d="M35.5 60.5V67.5L40 64Z" fill="#9a9a9a"/><path d="M47 59H52L53 60.5H60.5V70H47Z" fill="#1a6fd8"/>
<rect x="49" y="75" width="9" height="11" fill="#5c5c5c"/>
<path d="M15.5 95.5V102.5L20 99Z" fill="#9a9a9a"/><path d="M27 104H36.5A3 3 0 0 0 36.5 98A4.5 4.5 0 0 0 28 96.5A3.7 3.7 0 0 0 27 104Z" fill="none" stroke="#aaa" stroke-width="1.1"/>
<path d="M15.5 113.5V120.5L20 117Z" fill="#9a9a9a"/><path d="M27 121.5H36.5A3 3 0 0 0 36.5 115.5A4.5 4.5 0 0 0 28 114A3.7 3.7 0 0 0 27 121.5Z" fill="none" stroke="#aaa" stroke-width="1.1"/>
<path d="M15.5 130.5V137.5L20 134Z" fill="#9a9a9a"/><rect x="26.5" y="129.5" width="11" height="10" fill="none" stroke="#aaa" stroke-width="1.1"/><path d="M26.5 131.5H37.5" stroke="#aaa" stroke-width="1.1"/>
<path d="M15.5 148.5V155.5L20 152Z" fill="#9a9a9a"/><rect x="26.5" y="147.5" width="11" height="10" fill="none" stroke="#aaa" stroke-width="1.1"/><path d="M26.5 149.5H37.5" stroke="#aaa" stroke-width="1.1"/>
</svg>
<div style="font-size:10.5px;line-height:12px;color:#d6d6d6">
<div class="a nw" style="left:654px;top:340px">top</div>
<div class="a nw" style="left:665px;top:357px">127.0.0.1:29964</div>
<div class="a nw" style="left:675px;top:375px">appservice</div>
<div class="a nw" style="left:685px;top:393px">__dev__</div>
<div class="a" style="left:686px;top:407px;width:122px;height:18px;overflow:hidden"><div class="nw" style="position:absolute;left:0;top:4px;color:#c8c8c8">mainframe?t=1769591677</div></div>
<div class="a nw" style="left:665px;top:429px">(no domain)</div>
<div class="a nw" style="left:665px;top:446px">ide://</div>
<div class="a nw" style="left:665px;top:464px">appContext</div>
<div class="a" style="left:665px;top:478px;width:140px;height:11px;overflow:hidden"><div class="nw" style="position:absolute;left:0;top:3px">app_sub_debugContext</div></div>
</div>
<!-- source editor pane -->
<div class="a" style="left:821px;top:311px;width:397px;height:23px;background:#29292c"></div>
<div class="a" style="left:846px;top:311px;width:187px;height:23px;background:#0a0a0a"></div>
<svg class="a" style="left:826px;top:314px" width="20" height="18"><rect x="3.5" y="3.5" width="12" height="11" fill="none" stroke="#999" stroke-width="1.1"/><path d="M6.5 3.5V14.5" stroke="#999" stroke-width="1.1"/><path d="M12.5 6.5V11.5L9 9Z" fill="#999"/></svg>
<div class="a nw" style="left:854px;top:317px;font-size:10.5px;line-height:12px;color:#e0e0e0">vendor.js?t=wec...ac28b1f264dc89</div>
<svg class="a" style="left:1019px;top:316px" width="12" height="12"><path d="M2.5 3L8.5 9M8.5 3L2.5 9" stroke="#999" stroke-width="1.1"/></svg>
<svg class="a" style="left:1195px;top:314px" width="20" height="18"><rect x="2.5" y="3.5" width="14" height="11" fill="none" stroke="#999" stroke-width="1.1"/><path d="M12.5 3.5V14.5" stroke="#999" stroke-width="1.1"/><path d="M6 6.5V11.5L9.5 9Z" fill="#999"/></svg>
<div class="a" style="left:821px;top:334px;width:397px;height:1px;background:#3a3a3d"></div>
<div class="a" style="left:821px;top:335px;width:397px;height:52px;background:#232326"></div>
<svg class="a" style="left:826px;top:341px" width="18" height="16"><circle cx="8" cy="8" r="7" fill="#1a73e8"/><path d="M8 7V12" stroke="#fff" stroke-width="1.5"/><circle cx="8" cy="4.8" r="0.9" fill="#fff"/></svg>
<div class="a nw" style="left:845px;top:342px;font-size:11px;line-height:13px;color:#e6e6e6">Pretty-print this minified file?</div>
<div class="a nw" style="left:1145px;top:355px;font-size:10.3px;line-height:12px;color:#9a9a9a;text-decoration:underline">Learn more</div>
<svg class="a" style="left:1200px;top:355px" width="12" height="12"><path d="M2.5 2.5L8.5 8.5M8.5 2.5L2.5 8.5" stroke="#777" stroke-width="1.1"/></svg>
<div class="a" style="left:828px;top:362.5px;width:63px;height:21px;border-radius:2px;background:#1668b8"></div>
<div class="a nw" style="left:832px;top:367px;font-size:11px;line-height:13px;color:#fff">Pretty-print</div>
<div class="a" style="left:894.5px;top:362.5px;width:93px;height:21px;border-radius:2px;border:1px solid #3f3f42;background:#1f1f22"></div>
<div class="a nw" style="left:899px;top:367px;font-size:11px;line-height:13px;color:#e0e0e0">Don't show again</div>
<div class="a" style="left:821px;top:386px;width:397px;height:1px;background:#3f3f42"></div>
<div class="a" style="left:821px;top:387px;width:397px;height:91px;background:#202124"></div>
<div class="a" style="left:857px;top:387px;width:1px;height:91px;background:#3a3a3d"></div>
<div class="a" style="left:1206px;top:422px;width:12px;height:20px;background:#37373a"></div>
<div class="a" style="left:857px;top:465px;width:16px;height:13px;background:#2e2e31"></div>
<div style="font-family:'Liberation Mono',monospace;font-size:9.75px;line-height:12.3px">
<div class="a nw" style="left:843px;top:388.7px;color:#bbb">12</div>
<div class="a nw" style="left:843px;top:400.7px;color:#bbb">13</div>
<div class="a nw" style="left:843px;top:413.2px;color:#bbb">14</div>
<div class="a nw" style="left:843px;top:425.2px;color:#bbb">15</div>
<div class="a nw" style="left:861px;top:388.7px;color:#777">&nbsp;*/</div>
<div class="a" style="left:861px;top:400.7px;width:345px;overflow:hidden;white-space:nowrap;color:#ddd"><span style="color:#9a7fd6">var</span> <span style="color:#5aa8e0">n</span>=Object.<span style="color:#dcc45a">freeze</span>({});<span style="color:#9a7fd6">function</span> <span style="color:#5aa8e0">r</span>(<span style="color:#5aa8e0">t</span>){<span style="color:#9a7fd6">return</span> <span style="color:#9a7fd6">void</span> <span style="color:#7fc77f">0</span><span style="color:#dcc45a">===</span>t<span style="color:#dcc45a">||</span><span style="color:#8fd08f">nu</span></div>
<div class="a" style="left:861px;top:413.2px;width:345px;overflow:hidden;white-space:nowrap;color:#6a6a6a;font-style:italic">/*! regenerator-runtime -- Copyright (c) 2014-present, Face</div>
<div class="a nw" style="left:861px;top:425.2px;color:#ddd">}));</div>
</div>
<div class="a" style="left:821px;top:478px;width:397px;height:1px;background:#3a3a3d"></div>
<div class="a" style="left:821px;top:479px;width:397px;height:23px;background:#29292c"></div>
<div class="a nw" style="left:828px;top:483.5px;font-size:12px;line-height:13px;color:#999;font-weight:bold">{ }</div>
<div class="a nw" style="left:855px;top:485px;font-size:10.5px;line-height:12px;color:#ccc">Line 15, Column 5</div>
<div class="a nw" style="left:1143px;top:485px;font-size:10.5px;line-height:12px;color:#ccc">Coverage: n/a</div>
<!-- debugger sidebar -->
<div class="a" style="left:1218px;top:311px;width:1px;height:191px;background:#3a3a3d"></div>
<div class="a" style="left:1219px;top:311px;width:199px;height:23px;background:#29292c"></div>
<svg class="a" style="left:1219px;top:311px" width="186" height="23">
<path d="M11.5 7.5V15.5M16.5 7.5V15.5" stroke="#bbb" stroke-width="2.4"/>
<path d="M33 15A7 6 0 0 1 47 13" fill="none" stroke="#666" stroke-width="1.8"/><path d="M45 10.5L48 13.5L44.5 15" fill="#666"/><circle cx="40" cy="16" r="1.5" fill="#666"/>
<path d="M65 6V17M62.5 9L65 6.5L67.5 9M62.5 14L65 16.5L67.5 14" fill="none" stroke="#666" stroke-width="1.6"/>
<path d="M89.5 5V14M87 8L89.5 5.5L92 8" fill="none" stroke="#666" stroke-width="1.6"/><circle cx="89.5" cy="17" r="1.3" fill="#666"/>
<path d="M108 11.5H118M115 9L118 11.5L115 14" fill="none" stroke="#666" stroke-width="1.6"/><circle cx="109" cy="11.5" r="1.3" fill="#666"/>
<path d="M130.5 4V19" stroke="#444" stroke-width="1"/>
<path d="M139 8H150L154 11.5L150 15H139Z" fill="#aaa"/><path d="M139 18L151 5" stroke="#29292c" stroke-width="2.4"/><path d="M139.5 18.5L151.5 5.5" stroke="#aaa" stroke-width="1.1"/>
<circle cx="172" cy="11.5" r="6.5" fill="#aaa"/><path d="M170 8.5V14.5M174 8.5V14.5" stroke="#29292c" stroke-width="1.6"/>
</svg>
<div class="a" style="left:1219px;top:334px;width:186px;height:1px;background:#3a3a3d"></div>
<div class="a" style="left:1219px;top:335px;width:186px;height:166px;background:#222225"></div>
<div class="a" style="left:1219px;top:335px;width:186px;height:19px;background:#29292c"></div>
<div class="a" style="left:1219px;top:391px;width:186px;height:1px;background:#3a3a3d"></div>
<div class="a" style="left:1219px;top:392px;width:186px;height:19px;background:#29292c"></div>
<div class="a" style="left:1219px;top:411px;width:186px;height:1px;background:#3a3a3d"></div>
<div class="a" style="left:1219px;top:412px;width:186px;height:18px;background:#29292c"></div>
<div class="a" style="left:1219px;top:456px;width:186px;height:1px;background:#3a3a3d"></div>
<div class="a" style="left:1219px;top:457px;width:186px;height:18px;background:#29292c"></div>
<div class="a" style="left:1219px;top:500px;width:186px;height:1px;background:#3a3a3d"></div>
<div class="a" style="left:1405px;top:335px;width:13px;height:167px;background:#2b2b2e"></div>
<div class="a" style="left:1406px;top:335px;width:11px;height:95px;background:#333336"></div>
<svg class="a" style="left:1219px;top:335px" width="186" height="166">
<path d="M5 6.5H11L8 10.5Z" fill="#999"/>
<path d="M8 24L11.5 26V30L8 32L4.5 30V26Z" fill="#4a8fe8"/>
<path d="M6 63V69L10 66Z" fill="#999"/>
<path d="M5 83.5H11L8 87.5Z" fill="#999"/>
<path d="M5 128H11L8 132Z" fill="#999"/>
</svg>
<div style="font-size:10.4px;line-height:12px;color:#e0e0e0;position:absolute;left:0;top:0.8px">
<div class="a nw" style="left:1234px;top:338px">Threads</div>
<div class="a nw" style="left:1237px;top:357px">Main</div>
<div class="a nw" style="left:1237px;top:376px;color:#ccc">---</div>
<div class="a nw" style="left:1234px;top:396px">Watch</div>
<div class="a nw" style="left:1234px;top:415px">Call Stack</div>
<div class="a nw" style="left:1286px;top:438px;color:#bbb;font-style:italic">Not paused</div>
<div class="a nw" style="left:1234px;top:460px">Scope</div>
<div class="a nw" style="left:1286px;top:482px;color:#bbb;font-style:italic">Not paused</div>
</div>

<!-- DRAWER -->
<div class="a" style="left:621px;top:501px;width:797px;height:1px;background:#3f3f42"></div>
<div class="a" style="left:621px;top:502px;width:797px;height:24px;background:#29292c"></div>
<div class="a" style="left:646px;top:503px;width:55px;height:23px;background:#0a0a0a"></div>
<svg class="a" style="left:629px;top:506px" width="12" height="18"><circle cx="6" cy="4" r="1.1" fill="#bbb"/><circle cx="6" cy="8.5" r="1.1" fill="#bbb"/><circle cx="6" cy="13" r="1.1" fill="#bbb"/></svg>
<div class="a nw" style="left:654px;top:510px;font-size:10.4px;line-height:12px;color:#e8e8e8">Console</div>
<div class="a nw" style="left:710px;top:510px;font-size:10.4px;line-height:12px;color:#d6d6d6">Task</div>
<svg class="a" style="left:1396px;top:508px" width="14" height="14"><path d="M2.5 2.5L11 11M11 2.5L2.5 11" stroke="#bbb" stroke-width="1.3"/></svg>
<div class="a" style="left:621px;top:526px;width:797px;height:1px;background:#3a3a3d"></div>
<div class="a" style="left:621px;top:527px;width:797px;height:22px;background:#2a2b2f"></div>
<svg class="a" style="left:621px;top:527px" width="230" height="22">
<rect x="7.5" y="5.5" width="13" height="11" fill="none" stroke="#999" stroke-width="1.1"/><path d="M10.5 5.5V16.5" stroke="#999" stroke-width="1.1"/><path d="M13.5 8V14L17.5 11Z" fill="#999"/>
<circle cx="39" cy="11" r="5.3" fill="none" stroke="#999" stroke-width="1.5"/><path d="M35.5 7.5L42.5 14.5" stroke="#999" stroke-width="1.5"/>
<path d="M54.5 4V18" stroke="#444" stroke-width="1"/>
<path d="M172 9H179L175.5 13.5Z" fill="#999"/>
<path d="M184.5 4V18" stroke="#444" stroke-width="1"/>
<path d="M194 11C196.5 6.5 205.5 6.5 208 11C205.5 15.5 196.5 15.5 194 11Z" fill="#999"/><circle cx="201" cy="11" r="2.5" fill="#2a2b2f"/><circle cx="201" cy="11" r="1.2" fill="#999"/>
</svg>
<div class="a nw" style="left:685px;top:534px;font-size:10.4px;line-height:12px;color:#ddd">top</div>
<div class="a" style="left:846px;top:529px;width:165px;height:19px;border:1px solid #4a4a4e;background:#202124"></div>
<div class="a nw" style="left:850px;top:534px;font-size:10.4px;line-height:12px;color:#ddd">Filter</div>
<div class="a" style="left:1012px;top:531px;width:1px;height:15px;background:#444"></div>
<div class="a nw" style="left:1019px;top:534px;font-size:10.8px;line-height:12px;color:#d6d6d6">Default levels</div>
<svg class="a" style="left:1086px;top:534px" width="10" height="10"><path d="M1.5 2H8.5L5 7.5Z" fill="#999"/></svg>
<div class="a" style="left:1337px;top:531px;width:1px;height:15px;background:#444"></div>
<div class="a nw" style="left:1345px;top:534px;font-size:10.4px;line-height:12px;color:#aaa">4 hidden</div>
<svg class="a" style="left:1396px;top:531px" width="16" height="16"><path d="M12.35 6.51 L14.10 6.88 L14.10 9.12 L12.35 9.49 L12.13 10.02 L13.10 11.52 L11.52 13.10 L10.02 12.13 L9.49 12.35 L9.12 14.10 L6.88 14.10 L6.51 12.35 L5.98 12.13 L4.48 13.10 L2.90 11.52 L3.87 10.02 L3.65 9.49 L1.90 9.12 L1.90 6.88 L3.65 6.51 L3.87 5.98 L2.90 4.48 L4.48 2.90 L5.98 3.87 L6.51 3.65 L6.88 1.90 L9.12 1.90 L9.49 3.65 L10.02 3.87 L11.52 2.90 L13.10 4.48 L12.13 5.98Z" fill="#aaa"/><circle cx="8" cy="8" r="4.8" fill="#aaa"/><circle cx="8" cy="8" r="2" fill="#2a2b2f"/></svg>
<div class="a" style="left:621px;top:549px;width:784px;height:189px;background:#222225"></div>
<div class="a" style="left:1405px;top:549px;width:13px;height:189px;background:#2b2b2e"></div>
<div class="a" style="left:621px;top:549px;width:784px;height:6px;background:#332b00"></div>
<div class="a" style="left:621px;top:554.20px;width:784px;height:1px;background:#5c4f12"></div>
<div class="a" style="left:621px;top:555.20px;width:784px;height:29.34px;background:#332b00"></div>
<svg class="a" style="left:626px;top:558.70px" width="12" height="11"><path d="M6 1L11 10H1Z" fill="#f2c417" stroke="#f2c417" stroke-width="0.8" stroke-linejoin="round"/><path d="M6 4V7M6 8V9" stroke="#332b00" stroke-width="1.1"/></svg>
<div class="a nw mono" style="left:643px;top:558.60px;color:#eee3c2">[pages/home/homeGoods/goodsDetail] Some selectors are not allowed in component wxss, including tag name selectors, ID<br>selectors, and attribute selectors.(.<u>/components/bottom-btn.wxss:1</u>:13)</div>
<div class="a" style="left:621px;top:584.54px;width:784px;height:1px;background:#5c4f12"></div>
<div class="a" style="left:621px;top:585.54px;width:784px;height:29.34px;background:#332b00"></div>
<svg class="a" style="left:626px;top:589.04px" width="12" height="11"><path d="M6 1L11 10H1Z" fill="#f2c417" stroke="#f2c417" stroke-width="0.8" stroke-linejoin="round"/><path d="M6 4V7M6 8V9" stroke="#332b00" stroke-width="1.1"/></svg>
<div class="a nw mono" style="left:643px;top:588.94px;color:#eee3c2">[pages/home/homeGoods/goodsDetail] Some selectors are not allowed in component wxss, including tag name selectors, ID<br>selectors, and attribute selectors.(.<u>/components/dht-empty.wxss:1</u>:144)</div>
<div class="a" style="left:621px;top:614.88px;width:784px;height:1px;background:#5c4f12"></div>
<div class="a" style="left:621px;top:615.88px;width:784px;height:29.34px;background:#332b00"></div>
<svg class="a" style="left:626px;top:619.38px" width="12" height="11"><path d="M6 1L11 10H1Z" fill="#f2c417" stroke="#f2c417" stroke-width="0.8" stroke-linejoin="round"/><path d="M6 4V7M6 8V9" stroke="#332b00" stroke-width="1.1"/></svg>
<div class="a nw mono" style="left:643px;top:619.28px;color:#eee3c2">[pages/home/homeGoods/goodsDetail] Some selectors are not allowed in component wxss, including tag name selectors, ID<br>selectors, and attribute selectors.(.<u>/components/popChoose.wxss:1</u>:1856)</div>
<div class="a" style="left:621px;top:645.22px;width:784px;height:1px;background:#5c4f12"></div>
<div class="a" style="left:621px;top:646.22px;width:784px;height:29.34px;background:#332b00"></div>
<svg class="a" style="left:626px;top:649.72px" width="12" height="11"><path d="M6 1L11 10H1Z" fill="#f2c417" stroke="#f2c417" stroke-width="0.8" stroke-linejoin="round"/><path d="M6 4V7M6 8V9" stroke="#332b00" stroke-width="1.1"/></svg>
<div class="a nw mono" style="left:643px;top:649.62px;color:#eee3c2">[pages/home/homeGoods/goodsDetail] Some selectors are not allowed in component wxss, including tag name selectors, ID<br>selectors, and attribute selectors.(.<u>/components/icon-input.wxss:1</u>:219)</div>
<div class="a" style="left:621px;top:675.56px;width:784px;height:1px;background:#5c4f12"></div>
<div class="a" style="left:621px;top:676.56px;width:784px;height:29.34px;background:#332b00"></div>
<svg class="a" style="left:626px;top:680.06px" width="12" height="11"><path d="M6 1L11 10H1Z" fill="#f2c417" stroke="#f2c417" stroke-width="0.8" stroke-linejoin="round"/><path d="M6 4V7M6 8V9" stroke="#332b00" stroke-width="1.1"/></svg>
<div class="a nw mono" style="left:643px;top:679.96px;color:#eee3c2">[pages/home/homeGoods/goodsDetail] Some selectors are not allowed in component wxss, including tag name selectors, ID<br>selectors, and attribute selectors.(.<u>/components/bottom-btn.wxss:1</u>:13)</div>
<div class="a" style="left:621px;top:705.90px;width:784px;height:1px;background:#5c4f12"></div>
<svg class="a" style="left:626px;top:708px" width="10" height="12"><path d="M3 2.5L7 6L3 9.5" fill="none" stroke="#4a8fe8" stroke-width="1.3"/></svg>
<div class="a" style="left:1405px;top:722px;width:13px;height:16px;background:#3a3a3d"></div>
<!-- status right -->
<div class="a" style="left:621px;top:738px;width:797px;height:23px;background:#383838"></div>
<div style="font-size:10.2px;line-height:13px;color:#a8a8a8">
<div class="a nw" style="left:1215px;top:744px">行 1，列 1</div>
<div class="a nw" style="left:1279px;top:744px">空格: 2</div>
<div class="a nw" style="left:1327px;top:744px">UTF-8</div>
<div class="a nw" style="left:1369px;top:744px">LF</div>
<div class="a nw" style="left:1392px;top:744px">CSS</div>
</div>

</body></html>
